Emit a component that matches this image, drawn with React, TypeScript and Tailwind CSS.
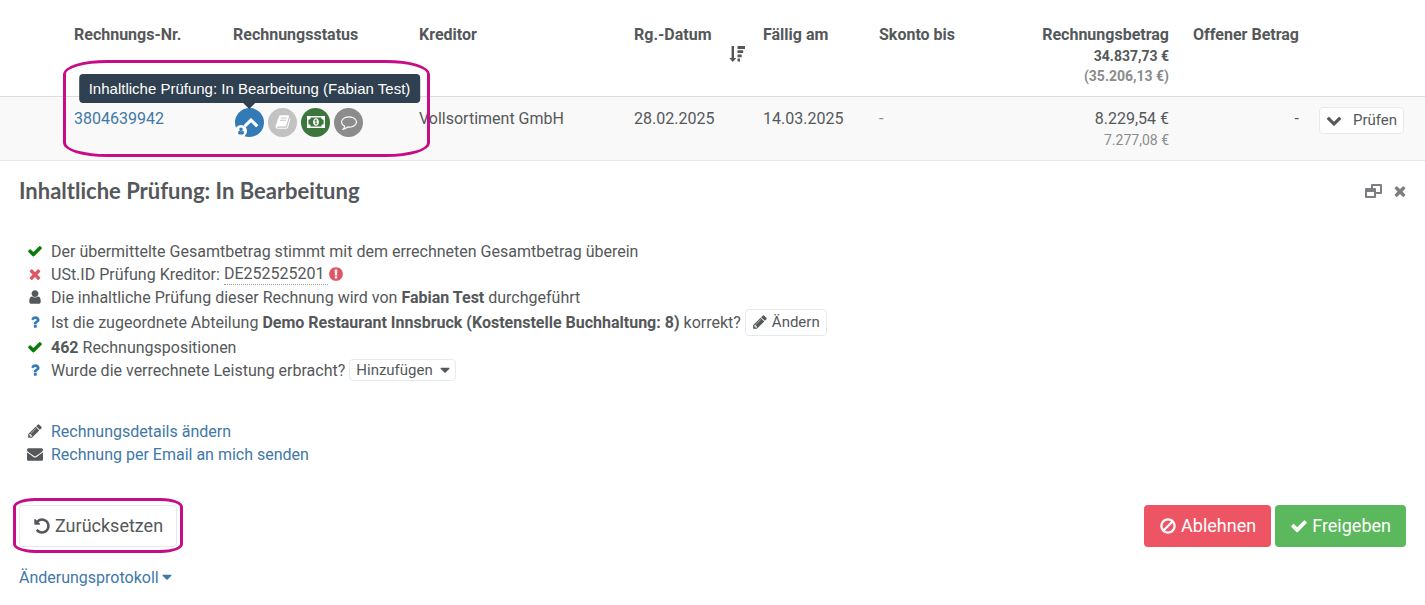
import type { ReactNode } from "react";

const PATHS = {
  check:
    "M1671 566q0 40-28 68l-724 724-136 136q-28 28-68 28t-68-28l-136-136-362-362q-28-28-28-68t28-68l136-136q28-28 68-28t68 28l294 295 656-657q28-28 68-28t68 28l136 136q28 28 28 68z",
  times:
    "M1490 1322q0 40-28 68l-136 136q-28 28-68 28t-68-28l-294-294-294 294q-28 28-68 28t-68-28l-136-136q-28-28-28-68t28-68l294-294-294-294q-28-28-28-68t28-68l136-136q28-28 68-28t68 28l294 294 294-294q28-28 68-28t68 28l136 136q28 28 28 68t-28 68l-294 294 294 294q28 28 28 68z",
  user:
    "M1536 1399q0 109-62.500 187t-150.500 78h-854q-88 0-150.500-78t-62.500-187q0-85 8.500-160.500t31.500-152 58.500-131 94-89 134.500-34.500q131 128 313 128t313-128q76 0 134.500 34.500t94 89 58.500 131 31.500 152 8.500 160.500zm-256-887q0 159-112.500 271.500t-271.500 112.500-271.500-112.500-112.500-271.500 112.500-271.500 271.500-112.500 271.500 112.500 112.500 271.500z",
  question:
    "M1088 1256v240q0 16-12 28t-28 12h-240q-16 0-28-12t-12-28v-240q0-16 12-28t28-12h240q16 0 28 12t12 28zm316-600q0 54-15.500 101t-35 76.500-55 59.500-57.500 43.500-61 35.500q-41 23-68.500 65t-27.500 67q0 17-12 32.500t-28 15.500h-240q-15 0-25.500-18.500t-10.500-37.500v-45q0-83 65-156.500t143-108.500q59-27 84-56t25-76q0-42-46.500-74t-107.500-32q-65 0-108 29-35 25-107 115-13 16-31 16-12 0-25-8l-164-125q-13-10-15.500-25t5.500-28q160-266 464-266 80 0 161 31t146 83 106 127.500 41 158.500z",
  exclamation:
    "M896 128q209 0 385.500 103t279.500 279.500 103 385.500-103 385.500-279.500 279.500-385.500 103-385.500-103-279.500-279.500-103-385.500 103-385.500 279.500-279.500 385.500-103zm128 1247v-190q0-14-9-23.500t-22-9.500h-192q-13 0-23 10t-10 23v190q0 13 10 23t23 10h192q13 0 22-9.500t9-23.500zm-2-344l18-621q0-12-10-18-10-8-24-8h-220q-14 0-24 8-10 6-10 18l17 621q0 10 10 17.500t24 7.500h185q14 0 23.500-7.500t10.500-17.500z",
  pencil:
    "M491 1536l91-91-235-235-91 91v107h128v128h107zm523-928q0-22-22-22-10 0-17 7l-542 542q-7 7-7 17 0 22 22 22 10 0 17-7l542-542q7-7 7-17zm-54-192l416 416-832 832h-416v-416zm683 96q0 53-37 90l-166 166-416-416 166-165q36-38 90-38 53 0 91 38l235 234q37 39 37 91z",
  envelope:
    "M1792 710v794q0 66-47 113t-113 47h-1472q-66 0-113-47t-47-113v-794q44 49 101 87 362 246 497 345 57 42 92.500 65.500t94.500 48 110 24.500h2q51 0 110-24.500t94.500-48 92.500-65.500q170-123 498-345 57-39 100-87zm0-294q0 79-49 151t-122 123q-376 261-468 325-10 7-42.500 31t-54 38.500-52 32.500-57.500 27-50 9h-2q-23 0-50-9t-57.500-27-52-32.500-54-38.500-42.500-31q-91-64-262-182.500t-205-142.500q-62-42-117-115.500t-55-136.500q0-78 41.500-130t118.500-52h1472q65 0 112.500 47t47.500 113z",
  undo:
    "M1664 896q0 156-61 298t-164 245-245 164-298 61q-172 0-327-72.500t-264-204.500q-7-10-6.500-22.500t8.500-20.500l137-138q10-9 25-9 16 2 23 12 73 95 179 147t225 52q104 0 198.500-40.500t163.500-109.500 109.500-163.500 40.500-198.500-40.500-198.500-109.500-163.500-163.500-109.500-198.500-40.500q-98 0-188 35.500t-160 101.500l137 138q31 30 14 69-17 40-59 40h-448q-26 0-45-19t-19-45v-448q0-42 40-59 39-17 69 14l130 129q107-101 244.500-156.500t284.500-55.500q156 0 298 61t245 164 164 245 61 298z",
  ban:
    "M1440 893q0-161-87-295l-754 753q137 89 297 89 111 0 211.500-43.500t173.500-116.500 116-174.500 43-212.500zm-999 299l755-754q-135-91-300-91-148 0-273 73t-198 199-73 274q0 162 89 299zm1223-299q0 157-61 300t-163.500 246-245 164-298.500 61-298.500-61-245-164-163.500-246-61-300 61-299.500 163.500-245.500 245-164 298.500-61 298.500 61 245 164 163.500 245.500 61 299.500z",
  caret:
    "M1408 704q0 26-19 45l-448 448q-19 19-45 19t-45-19l-448-448q-19-19-19-45t19-45 45-19h896q26 0 45 19t19 45z",
  chevronDown:
    "M1683 808l-742 741q-19 19-45 19t-45-19l-742-741q-19-19-19-45.500t19-45.500l166-165q19-19 45-19t45 19l531 531 531-531q19-19 45-19t45 19l166 165q19 19 19 45.500t-19 45.500z",
  comment:
    "M896 384q-204 0-381.500 69.500t-282 187.500-104.500 255q0 112 71.500 213.500t201.500 175.500l87 50-27 96q-24 91-70 172 152-63 275-171l43-38 57 6q69 8 130 8 204 0 381.500-69.500t282-187.500 104.500-255-104.500-255-282-187.500-381.500-69.500zm896 512q0 174-120 321.500t-326 233-450 85.500q-70 0-145-8-198 175-460 242-49 14-114 22h-5q-15 0-27-10.500t-16-27.500v-1q-3-4-.5-12t2-10 4.500-9.500l6-9 7-8.500 8-9q7-8 31-34.500t34.500-38 31-39.500 32.500-51 27-59 26-76q-157-89-247.500-220t-90.500-281q0-174 120-321.500t326-233 450-85.500 450 85.500 326 233 120 321.500z",
  book:
    "M1703 478q40 57 18 129l-275 906q-19 64-76.500 107.500t-122.500 43.500h-923q-77 0-148.500-53.500t-99.500-131.500q-24-67-2-127 0-4 3-27t4-37q1-8-3-21.500t-3-19.500q2-11 8-21t16.500-23.500 16.500-23.500q23-38 45-91.500t30-91.500q3-10 .5-30t-.5-28q3-11 17-28t17-23q21-36 42-92t25-90q1-9-2.500-32t.5-28q4-13 22-30.500t22-22.500q19-26 42.500-84.500t27.500-96.500q1-8-3-25.500t-2-26.500q2-8 9-18t18-23 17-21q8-12 16.500-30.500t15-35 16-36 19.500-32 26.500-23.500 36-11.500 47.500 5.500l-1 3q38-9 51-9h761q74 0 114 56t18 130l-274 906q-36 119-71.500 153.500t-128.500 34.500h-869q-27 0-38 15-11 16-1 43 24 70 144 70h923q29 0 56-15.500t35-41.500l300-987q7-22 5-57 38 15 59 43zm-1064 2q-4 13 2 22.500t20 9.500h608q13 0 25.500-9.500t16.500-22.500l21-64q4-13-2-22.500t-20-9.500h-608q-13 0-25.500 9.500t-16.500 22.500zm-83 256q-4 13 2 22.500t20 9.500h608q13 0 25.500-9.500t16.500-22.500l21-64q4-13-2-22.500t-20-9.500h-608q-13 0-25.500 9.500t-16.500 22.500z",
};

function Icon({ name, className = "size-4" }: { name: keyof typeof PATHS; className?: string }) {
  return (
    <svg viewBox="0 0 1792 1792" fill="currentColor" aria-hidden="true" className={`shrink-0 ${className}`}>
      <path d={PATHS[name]} />
    </svg>
  );
}

function SortIcon() {
  return (
    <svg viewBox="0 0 16 16" fill="currentColor" aria-hidden="true" className="size-4">
      <path d="M2.600 0h2.400v12h2.300L3.800 16 .3 12h2.300zM8.500 0H16v2.900H8.500zM8.500 4.200h5.700v2.900H8.500zM8.500 8.400h4.200v2.900H8.500zM8.500 12.600h2.500v2.900H8.500z" />
    </svg>
  );
}

function RestoreIcon() {
  return (
    <svg viewBox="0 0 17 14" fill="currentColor" fillRule="evenodd" aria-hidden="true" className="h-3.5 w-[17px]">
      <path d="M7 0h9a1 1 0 0 1 1 1v8a1 1 0 0 1-1 1h-5V8h4V2H8v2H6V1a1 1 0 0 1 1-1zM1 4h9a1 1 0 0 1 1 1v8a1 1 0 0 1-1 1H1a1 1 0 0 1-1-1V5a1 1 0 0 1 1-1zm1 4v4h7V8z" />
    </svg>
  );
}

function MoneyIcon() {
  return (
    <svg viewBox="0 0 18 12" aria-hidden="true" className="h-3 w-[18px]">
      <path
        fill="currentColor"
        fillRule="evenodd"
        d="M0 0h18v12H0zM3.800 1.400a2.400 2.400 0 0 1-2.400 2.400v4.400a2.400 2.400 0 0 1 2.400 2.400h10.400a2.400 2.400 0 0 1 2.400-2.400V3.800a2.400 2.400 0 0 1-2.400-2.400zM9 2.200c1.800 0 2.900 1.800 2.900 3.800S10.800 9.800 9 9.800 6.100 8 6.100 6 7.200 2.200 9 2.200z"
      />
      <path fill="#3c763d" d="M8.600 3.600h1v3.800h.8v.9H7.700v-.9h.8V5l-.6.4-.5-.7z" />
    </svg>
  );
}

function Status({ label, tone, children }: { label: string; tone: string; children: ReactNode }) {
  return (
    <span role="img" aria-label={label} className={`relative flex size-[29px] items-center justify-center rounded-full text-white ${tone}`}>
      {children}
    </span>
  );
}

function Line({ icon, tone = "", children }: { icon: keyof typeof PATHS; tone?: string; children: ReactNode }) {
  return (
    <li className="flex min-h-[23px] items-center gap-2">
      <span className={tone}>
        <Icon name={icon} />
      </span>
      <div className="flex flex-wrap items-center gap-1">{children}</div>
    </li>
  );
}

const frame = "pointer-events-none absolute border-[3px] border-[#c60c87]";
const smallButton = "flex items-center rounded border border-[#e7eaec] bg-white text-[15px]";

export default function App() {
  return (
    <main className="min-h-screen bg-white pb-4 font-['Roboto',sans-serif] text-base leading-[23px] text-[#55585a]">
      <table className="w-full table-fixed border-collapse text-left">
        <colgroup>
          <col className="w-[66px]" />
          <col className="w-[159px]" />
          <col className="w-[186px]" />
          <col />
          <col className="w-[129px]" />
          <col className="w-[116px]" />
          <col className="w-[140px]" />
          <col className="w-[166px]" />
          <col className="w-[130px]" />
          <col className="w-[118px]" />
        </colgroup>
        <thead>
          <tr className="h-24 border-b border-[#dddddd] align-top whitespace-nowrap *:px-2 *:pt-[23px] *:font-bold">
            <td />
            <th scope="col">Rechnungs-Nr.</th>
            <th scope="col">Rechnungsstatus</th>
            <th scope="col">Kreditor</th>
            <th scope="col" aria-sort="descending">
              Rg.-Datum
              <span className="flex justify-end pr-0.5">
                <SortIcon />
              </span>
            </th>
            <th scope="col">Fällig am</th>
            <th scope="col">Skonto bis</th>
            <th scope="col" className="text-right">
              Rechnungsbetrag
              <span className="block text-sm leading-5">34.837,73 €</span>
              <span className="block text-sm leading-5 text-[#8a8c8e]">(35.206,13 €)</span>
            </th>
            <th scope="col" className="text-right">Offener Betrag</th>
            <td />
          </tr>
        </thead>
        <tbody>
          <tr className="h-16 border-b border-[#e7e7e7] bg-[#f9f9f9] align-top whitespace-nowrap *:px-2 *:pt-[10px]">
            <td />
            <td>
              <a href="#rechnung" className="text-[#4078a8]">3804639942</a>
            </td>
            <td>
              <div className="relative mt-px flex w-fit gap-1 pl-0.5">
                <Status label="Inhaltliche Prüfung" tone="bg-[#337ab7]">
                  <Icon name="chevronDown" className="mt-1 ml-0.5 size-4 rotate-180" />
                  <span className="absolute bottom-0 left-0 flex size-3 items-center justify-center rounded-full bg-white text-[#337ab7]">
                    <Icon name="user" className="size-2" />
                  </span>
                  <span role="tooltip" className="absolute bottom-full left-1/2 mb-[5px] -translate-x-1/2 rounded bg-[#2f4050] px-[10px] py-[3px] font-['Liberation_Sans',sans-serif] text-[15px]">
                    Inhaltliche Prüfung: In Bearbeitung (Fabian Test)
                    <svg viewBox="0 0 12 6" aria-hidden="true" className="absolute top-full left-1/2 h-1.5 w-3 -translate-x-1/2 fill-[#2f4050]">
                      <path d="M0 0h12L6 6z" />
                    </svg>
                  </span>
                </Status>
                <Status label="Buchung" tone="bg-[#c2c2c2]">
                  <Icon name="book" />
                </Status>
                <Status label="Zahlung" tone="bg-[#3c763d]">
                  <MoneyIcon />
                </Status>
                <Status label="Kommentare" tone="bg-[#8c8c8c]">
                  <Icon name="comment" />
                </Status>
                <span className={`${frame} -top-12 -right-[67px] -bottom-5 -left-[170px] rounded-[44px/14px]`} />
              </div>
            </td>
            <td>Vollsortiment GmbH</td>
            <td>28.02.2025</td>
            <td>14.03.2025</td>
            <td className="text-[#8a8c8e]">-</td>
            <td className="text-right">
              8.229,54 €
              <span className="block text-sm leading-5 text-[#8a8c8e]">7.277,08 €</span>
            </td>
            <td className="text-right">-</td>
            <td>
              <button type="button" className={`${smallButton} ml-1 h-[27px] gap-[11px] px-1.5`}>
                <Icon name="chevronDown" />
                Prüfen
              </button>
            </td>
          </tr>
        </tbody>
      </table>

      <section className="px-[19px] pt-[18px]">
        <header className="flex items-center justify-between">
          <h2 className="font-['Lato',sans-serif] text-[22px] leading-6 font-bold">Inhaltliche Prüfung: In Bearbeitung</h2>
          <div className="-mr-0.5 flex items-center gap-2.5 text-[#7c7f81]">
            <button type="button" aria-label="In neuem Fenster öffnen">
              <RestoreIcon />
            </button>
            <button type="button" aria-label="Schließen">
              <Icon name="times" />
            </button>
          </div>
        </header>

        <ul className="mt-[37px] pl-2">
          <Line icon="check" tone="text-[#0a7a0a]">Der übermittelte Gesamtbetrag stimmt mit dem errechneten Gesamtbetrag überein</Line>
          <Line icon="times" tone="text-[#e05563]">
            USt.ID Prüfung Kreditor:
            <span className="flex items-center">
              <span className="border-b border-dotted border-[#999999] pr-1 leading-5">DE252525201</span>
              <span className="text-[#e05563]">
                <Icon name="exclamation" />
              </span>
            </span>
          </Line>
          <Line icon="user">
            <span>
              Die inhaltliche Prüfung dieser Rechnung wird von <strong>Fabian Test</strong> durchgeführt
            </span>
          </Line>
          <Line icon="question" tone="text-[#337ab7]">
            <span>
              Ist die zugeordnete Abteilung <strong>Demo Restaurant Innsbruck (Kostenstelle Buchhaltung: 8)</strong> korrekt?
            </span>
            <button type="button" className={`${smallButton} h-[27px] gap-1 px-1.5`}>
              <Icon name="pencil" />
              Ändern
            </button>
          </Line>
          <Line icon="check" tone="text-[#0a7a0a]">
            <span>
              <strong>462</strong> Rechnungspositionen
            </span>
          </Line>
          <Line icon="question" tone="text-[#337ab7]">
            Wurde die verrechnete Leistung erbracht?
            <button type="button" aria-haspopup="menu" className={`${smallButton} h-[22px] gap-1 pr-0.5 pl-1.5`}>
              Hinzufügen
              <Icon name="caret" />
            </button>
          </Line>
        </ul>

        <ul className="mt-[38px] pl-2">
          <Line icon="pencil">
            <a href="#details" className="text-[#4078a8]">Rechnungsdetails ändern</a>
          </Line>
          <Line icon="envelope">
            <a href="#email" className="text-[#4078a8]">Rechnung per Email an mich senden</a>
          </Line>
        </ul>

        <div className="mt-[39px] flex items-center justify-between text-lg">
          <div className="relative">
            <button type="button" className="flex h-[42px] items-center gap-1 rounded border border-[#e7eaec] bg-white px-[13px]">
              <Icon name="undo" className="size-[18px]" />
              Zurücksetzen
            </button>
            <span className={`${frame} -inset-x-1.5 -top-[7px] -bottom-1.5 rounded-[22px/9px]`} />
          </div>
          <div className="flex gap-1 text-white">
            <button type="button" className="flex h-[42px] items-center gap-1 rounded bg-[#ed5565] px-[15px]">
              <Icon name="ban" className="size-[18px]" />
              Ablehnen
            </button>
            <button type="button" className="flex h-[42px] items-center gap-1 rounded bg-[#5cb85c] px-[15px]">
              <Icon name="check" className="size-[18px]" />
              Freigeben
            </button>
          </div>
        </div>

        <a href="#protokoll" className="mt-[19px] flex w-fit items-center text-[#4078a8]">
          Änderungsprotokoll
          <Icon name="caret" />
        </a>
      </section>
    </main>
  );
}
